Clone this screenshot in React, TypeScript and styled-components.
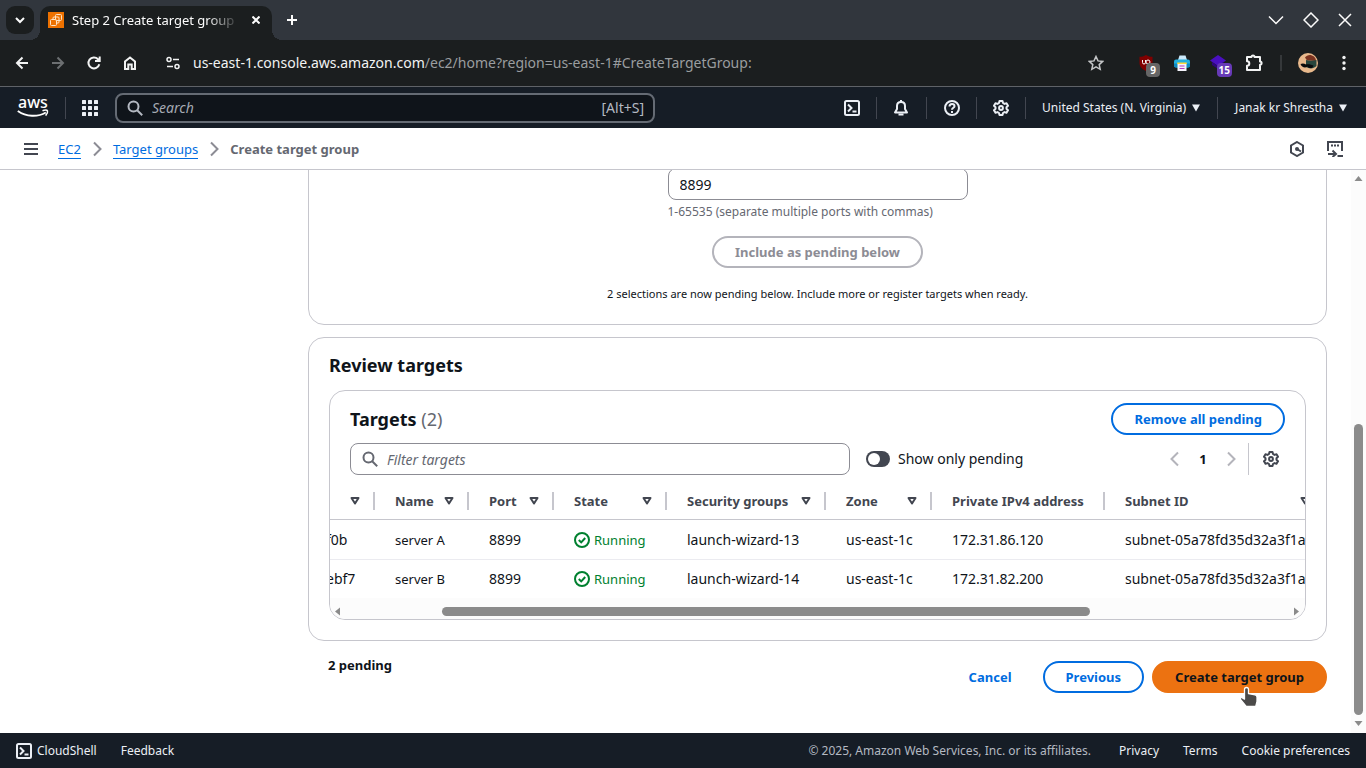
import React from "react";
import styled, { createGlobalStyle } from "styled-components";

const Global = createGlobalStyle`
  *, *::before, *::after { box-sizing: border-box; }
  body { margin: 0; background: #fff; }
  body, button, input { font-family: "Noto Sans", "Open Sans", sans-serif; }
  button { padding: 0; border: 0; background: none; color: inherit; cursor: pointer; }
  a { color: inherit; text-decoration: none; }
  svg { display: block; flex: none; }
`;

const Page = styled.div`
  display: flex;
  flex-direction: column;
  height: 100vh;
  overflow: hidden;
  font-size: 14px;
  line-height: 20px;
  color: #0f141a;
`;

/* ---------- browser window ---------- */

const TabStrip = styled.header`
  display: flex;
  align-items: center;
  height: 40px;
  flex: none;
  padding: 0 10px 0 6px;
  background: #31363d;
  color: #fcfcfc;
`;

const TabSearch = styled.button`
  display: grid;
  place-items: center;
  width: 28px;
  height: 28px;
  border-radius: 9px;
  background: #1b1e1f;
`;

const Tab = styled.div`
  display: flex;
  align-items: center;
  align-self: flex-end;
  width: 232px;
  height: 34px;
  margin-left: 6px;
  padding: 0 8px 6px;
  gap: 8px;
  border-radius: 10px 10px 0 0;
  background: #1b1e1f;
  position: relative;

  &::before, &::after {
    content: "";
    position: absolute;
    bottom: 0;
    width: 10px;
    height: 10px;
  }
  &::before { left: -10px; background: radial-gradient(circle at 0 0, transparent 10px, #1b1e1f 10px); }
  &::after { right: -10px; background: radial-gradient(circle at 100% 0, transparent 10px, #1b1e1f 10px); }
`;

const TabTitle = styled.span`
  flex: 1;
  overflow: hidden;
  white-space: nowrap;
  font-size: 13px;
  mask-image: linear-gradient(to right, #000 80%, transparent);
`;

const IconButton = styled.button<{ $w?: number; $color?: string }>`
  display: grid;
  place-items: center;
  width: ${(p) => p.$w ?? 24}px;
  height: 24px;
  flex: none;
  color: ${(p) => p.$color ?? "inherit"};
`;

const Spacer = styled.div`
  flex: 1;
`;

const WindowButtons = styled.div`
  display: flex;
  gap: 11px;
`;

const Toolbar = styled.div`
  display: flex;
  align-items: center;
  height: 47px;
  flex: none;
  padding: 0 10px;
  border-bottom: 1px solid #5f6267;
  background: #1b1e1f;
  color: #f2f3f3;
`;

const NavGroup = styled.div`
  display: flex;
  gap: 12px;
  margin-right: 23px;
`;

const Address = styled.span`
  flex: 1;
  margin-left: 12px;
  font-size: 14px;
  color: #9a9d9f;

  b { font-weight: 400; color: #f2f3f3; }
`;

const Extensions = styled.div`
  display: flex;
  align-items: center;
  gap: 12px;
`;

const ToolGap = styled.i`
  width: 2px;
`;

const BadgeHost = styled.span`
  position: relative;
  display: block;
`;

const Badge = styled.span<{ $bg: string }>`
  position: absolute;
  top: 8px;
  right: -6px;
  min-width: 14px;
  height: 14px;
  padding: 0 2px;
  border-radius: 4px;
  background: ${(p) => p.$bg};
  color: #fff;
  font-size: 10px;
  font-weight: 700;
  line-height: 14px;
  text-align: center;
`;

const ToolbarRule = styled.i`
  width: 2px;
  height: 16px;
  margin: 0 2px;
  background: #35383a;
`;

/* ---------- console navigation ---------- */

const ConsoleNav = styled.nav`
  display: flex;
  align-items: center;
  height: 41px;
  flex: none;
  padding: 0 19px 0 17px;
  background: #161d26;
  color: #ebeff5;
  font-size: 12px;
`;

const NavRule = styled.i<{ $gap: number }>`
  width: 1px;
  height: 22px;
  margin: 0 ${(p) => p.$gap}px;
  background: #424650;
`;

const NavSearch = styled.label`
  display: flex;
  align-items: center;
  flex: 0 1 540px;
  height: 30px;
  margin-left: 17px;
  padding: 0 9px 0 10px;
  gap: 9px;
  border: 2px solid #656b74;
  border-radius: 8px;
  background: #0f141a;
  color: #b4b9c2;

  input {
    flex: 1;
    min-width: 0;
    padding: 0;
    border: 0;
    outline: 0;
    background: none;
    color: inherit;
    font-size: 14px;
  }
  input::placeholder { color: #a4a9b2; opacity: 1; font-style: italic; }
  span { font-size: 14px; }
`;

const NavMenu = styled.button`
  display: flex;
  align-items: center;
  gap: 6px;
  font-size: 12px;
  white-space: nowrap;
`;

const CrumbBar = styled.nav`
  display: flex;
  align-items: center;
  height: 42px;
  flex: none;
  padding: 0 12px 0 19px;
  border-bottom: 1px solid #c6c6cd;
  background: #fff;
  color: #424650;
`;

const Crumbs = styled.ol`
  display: flex;
  align-items: center;
  gap: 8px;
  margin: 0 0 0 15px;
  padding: 0;
  list-style: none;
  font-size: 13px;
  line-height: 18px;

  a { color: #006ce0; border-bottom: 1px solid #006ce0; }
  li[aria-current] { font-weight: 700; color: #656871; }
`;

const CrumbSep = styled.span`
  display: block;
  color: #8c8c94;
`;

/* ---------- content ---------- */

const Body = styled.div`
  display: flex;
  flex: 1;
  min-height: 0;
`;

const Main = styled.main`
  display: flex;
  flex-direction: column;
  justify-content: flex-end;
  flex: 1;
  min-width: 0;
  overflow: hidden;
  padding: 0 24px 40px 308px;

  > * { flex: none; }
`;

const Card = styled.section`
  border: 1px solid #c6c6cd;
  border-radius: 16px;
  background: #fff;
`;

const PortsCard = styled(Card)`
  display: flex;
  flex-direction: column;
  align-items: center;
  margin-bottom: 12px;
  padding: 40px 20px 22px;
`;

const Field = styled.label`
  display: flex;
  flex-direction: column;
  gap: 4px;
  width: 300px;
  margin-bottom: 16px;
  font-size: 12px;
  line-height: 16px;
  color: #656871;

  input {
    height: 32px;
    padding: 0 11px;
    border: 1px solid #8c8c94;
    border-radius: 8px;
    background: #fff;
    color: #0f141a;
    font-size: 14px;
  }
`;

const Note = styled.p`
  margin: 18px 0 0;
  font-size: 11px;
  line-height: 16px;
`;

const tones = {
  normal: { border: "#006ce0", bg: "#fff", color: "#006ce0" },
  disabled: { border: "#b4b4bb", bg: "#fff", color: "#8c8c94" },
  primary: { border: "#ec7211", bg: "#ec7211", color: "#0f141a" },
  link: { border: "transparent", bg: "transparent", color: "#006ce0" },
};

const Button = styled.button<{ $tone?: keyof typeof tones }>`
  height: 32px;
  padding: 0 21px;
  border: 2px solid ${(p) => tones[p.$tone ?? "normal"].border};
  border-radius: 16px;
  background: ${(p) => tones[p.$tone ?? "normal"].bg};
  color: ${(p) => tones[p.$tone ?? "normal"].color};
  font-size: 13px;
  font-weight: 700;
  line-height: 20px;
  white-space: nowrap;
`;

const ReviewCard = styled(Card)`
  padding: 15px 20px 20px;
`;

const Heading = styled.h2`
  margin: 0;
  font-size: 18px;
  font-weight: 700;
  line-height: 24px;

  span { font-weight: 400; color: #656871; }
`;

const TableCard = styled(Card)`
  margin-top: 13px;
  padding-top: 12px;
  overflow: hidden;
`;

const TableTop = styled.div`
  display: flex;
  align-items: center;
  justify-content: space-between;
  height: 32px;
  margin-bottom: 8px;
  padding: 0 20px;
`;

const TableTools = styled.div`
  display: flex;
  align-items: center;
  height: 32px;
  margin-bottom: 7px;
  padding: 0 22px 0 20px;
`;

const Filter = styled.label`
  display: flex;
  align-items: center;
  gap: 9px;
  flex: 0 1 500px;
  height: 32px;
  margin-right: 16px;
  padding: 0 11px;
  border: 1px solid #8c8c94;
  border-radius: 8px;
  color: #656871;

  input {
    flex: 1;
    min-width: 0;
    padding: 0;
    border: 0;
    outline: 0;
    background: none;
    font-size: 14px;
  }
  input::placeholder { color: #656871; opacity: 1; font-style: italic; }
`;

const Toggle = styled.label`
  display: flex;
  align-items: center;
  gap: 8px;
  font-size: 14px;

  input {
    appearance: none;
    width: 24px;
    height: 16px;
    margin: 0;
    padding: 2px;
    border-radius: 8px;
    background: #424650;
  }
  input::before {
    content: "";
    display: block;
    width: 12px;
    height: 12px;
    border-radius: 6px;
    background: #fff;
  }
  input:checked { background: #006ce0; padding-left: 10px; }
`;

const Pager = styled.div`
  display: flex;
  align-items: center;
  gap: 4px;
  font-size: 13px;
  font-weight: 700;

  span { width: 24px; text-align: center; }
`;

const ToolRule = styled.i`
  width: 1px;
  height: 32px;
  margin: 0 10px 0 5px;
  background: #c6c6cd;
`;

const TableScroller = styled.div`
  overflow: hidden;
`;

const Table = styled.table`
  width: 1019px;
  margin-left: -24px;
  border-collapse: separate;
  border-spacing: 0;
  table-layout: fixed;
  font-size: 14px;
  line-height: 20px;
  white-space: nowrap;

  th, td { padding: 0; text-align: left; border-bottom: 1px solid #ebebf0; }
  th { height: 38px; border-bottom-color: #c6c6cd; color: #424650; font-size: 13px; }
  td { height: 40px; padding-left: 20px; }
  tr:last-child td { height: 38px; border-bottom: 0; }
`;

const Col = styled.col<{ $w: number }>`
  width: ${(p) => p.$w}px;
`;

const HeadCell = styled.div<{ $last?: boolean }>`
  display: flex;
  align-items: center;
  justify-content: space-between;
  height: 18px;
  padding: 0 13px 0 20px;
  border-right: 2px solid ${(p) => (p.$last ? "transparent" : "#c6c6cd")};
`;

const NameText = styled.span`
  font-size: 13px;
`;

const Status = styled.span`
  display: flex;
  align-items: center;
  gap: 4px;
  font-size: 13px;
  color: #00802f;
`;

const HScroll = styled.div`
  display: flex;
  align-items: center;
  height: 21px;
  padding: 6px 6px 0 5px;
  background: #fcfcfc;
  color: #8b8b8b;
`;

const HTrack = styled.div`
  display: grid;
  grid-template-columns: 98fr 648fr 200fr;
  flex: 1;

  i { grid-column: 2; height: 9px; border-radius: 5px; background: #8b8b8b; }
`;

const Actions = styled.div`
  display: flex;
  align-items: center;
  gap: 8px;
  margin-top: 20px;
  padding-left: 20px;
`;

const Pending = styled.strong`
  flex: 1;
  align-self: flex-start;
  height: 20px;
  margin-top: -6px;
  font-size: 13px;
`;

const PrimaryWrap = styled.div`
  position: relative;

  > svg { position: absolute; left: 86px; top: 24px; pointer-events: none; }
`;

const VScroll = styled.div`
  display: flex;
  flex-direction: column;
  align-items: center;
  width: 15px;
  padding: 6px 0 6px;
  background: #fcfcfc;
  color: #8b8b8b;
`;

const VTrack = styled.div`
  display: grid;
  grid-template-rows: 239fr 291fr 3fr;
  flex: 1;

  i { grid-row: 2; width: 9px; border-radius: 5px; background: #8b8b8b; }
`;

const Footer = styled.footer`
  display: flex;
  align-items: center;
  height: 35px;
  flex: none;
  padding: 0 16px;
  gap: 24px;
  background: #161d26;
  color: #ebeff5;
  font-size: 12px;
  white-space: nowrap;

  p { margin: 0 4px 0 auto; color: #b4b9c2; }
`;

const ShellLink = styled.button`
  display: flex;
  align-items: center;
  gap: 5px;
  font-size: 12px;
`;

/* ---------- icons ---------- */

type IconProps = { size?: number; w?: number; children: React.ReactNode; box?: string };
const Icon = ({ size = 16, w = 2, box = "0 0 16 16", children }: IconProps) => (
  <svg width={size} height={size} viewBox={box} fill="none" stroke="currentColor" strokeWidth={w} aria-hidden="true">
    {children}
  </svg>
);

const Gear = () => (
  <Icon>
    <path d="M6.500 1h3l.5 2 1.500.900 2-.6 1.500 2.500L13.500 7.200v1.600l1.500 1.400-1.500 2.500-2-.6-1.500.900-.5 2h-3l-.5-2-1.500-.9-2 .6L1 10.200l1.500-1.400V7.200L1 5.800l1.500-2.500 2 .6L6 3z" strokeLinejoin="round" />
    <circle cx="8" cy="8" r="1.900" />
  </Icon>
);

const Shell = () => (
  <Icon>
    <rect x="1" y="1" width="14" height="14" rx="1.500" />
    <path d="M4 4.500 7.500 8 4 11.500M8.500 11.500H12.500" />
  </Icon>
);

const Magnifier = () => (
  <Icon>
    <circle cx="6.500" cy="6.500" r="5" />
    <path d="m10.200 10.200 5 5" />
  </Icon>
);

const Caret = () => (
  <svg width="8" height="8" viewBox="0 0 8 8" fill="currentColor" aria-hidden="true"><path d="M0 .5h8L4 7.500z" /></svg>
);

const SortIcon = () => (
  <svg width="10" height="10" viewBox="0 0 10 10" fill="none" stroke="currentColor" strokeWidth="2" strokeLinejoin="round" aria-hidden="true">
    <path d="M1.500 2h7L5 7.500z" />
  </svg>
);

const Chevron = ({ left }: { left?: boolean }) => (
  <Icon>{left ? <path d="M11 1.500 4.500 8l6.500 6.500" /> : <path d="M5 1.500 11.500 8 5 14.500" />}</Icon>
);

const Check = () => (
  <Icon>
    <circle cx="8" cy="8" r="7" />
    <path d="m4.800 8 2.400 2.400 4-4.400" />
  </Icon>
);

const Arrow = ({ d }: { d: string }) => (
  <svg width="9" height="9" viewBox="0 0 9 9" fill="currentColor" aria-hidden="true"><path d={d} /></svg>
);

const AwsLogo = () => (
  <svg width="32" height="22" viewBox="0 0 32 22" fill="none" overflow="visible" aria-label="aws">
    <text x="1" y="11" fill="#fff" fontFamily="Noto Sans, sans-serif" fontSize="16" fontWeight="500">aws</text>
    <path d="M.8 14c8.500 6 20 6.300 28 1.500" stroke="#fff" strokeWidth="2" />
    <path d="M25.500 13.800c2-.9 4.600-1 5 .1.300 1.100-.5 3.300-1.900 4.700" stroke="#fff" strokeWidth="1.500" />
  </svg>
);

const Favicon = () => (
  <svg width="16" height="16" viewBox="0 0 16 16" fill="none" aria-hidden="true">
    <rect width="16" height="16" fill="#ed7100" />
    <g stroke="#ffe3c4" strokeWidth="1">
      <rect x="7.500" y="2.500" width="6" height="6" rx="1" />
      <rect x="2.500" y="7.500" width="6" height="6" rx="1" />
      <path d="M5 7.500V6q0-1 1-1h4q1 0 1 1v4q0 1-1 1H8.500" />
    </g>
  </svg>
);

const Shield = () => (
  <svg width="16" height="16" viewBox="0 0 16 16" aria-hidden="true">
    <path d="M8 0c2 1.300 4 1.800 6.500 1.800v6C14.500 12 11.500 14.500 8 16 4.500 14.500 1.500 12 1.500 7.800v-6C4 1.800 6 1.300 8 0z" fill="#800000" />
    <path d="M4.500 5v2.500a1.500 1.500 0 0 0 3 0V5" stroke="#fff" fill="none" />
    <circle cx="10" cy="7" r="2" stroke="#fff" fill="none" />
  </svg>
);

const Printer = () => (
  <svg width="16" height="16" viewBox="0 0 16 16" aria-hidden="true">
    <path d="M4 5 5.500.5h6L13 5z" fill="#cbe9fb" />
    <rect y="4.500" width="16" height="8" rx="2" fill="#22b0e0" />
    <path d="M0 8.500h16v2a2 2 0 0 1-2 2H2a2 2 0 0 1-2-2z" fill="#0d8ac0" />
    <rect x="3" y="7.500" width="10" height="1.500" rx=".7" fill="#ffd83c" />
    <path d="M3.500 9h9v7h-9z" fill="#f4f4fb" />
    <path d="M5.500 11h5M5.500 13.500h5" stroke="#b13bc4" strokeWidth="1.200" />
  </svg>
);

const Cap = () => (
  <svg width="16" height="16" viewBox="0 0 16 16" aria-hidden="true">
    <path d="M8 0 16 5.500 8 11 0 5.500z" fill="#4a0fc0" />
    <path d="M2 7v3l6 4 6-4V7l-6 4z" fill="#2d067c" />
  </svg>
);

const Avatar = () => (
  <svg width="20" height="20" viewBox="0 0 20 20" aria-hidden="true">
    <circle cx="10" cy="10" r="10" fill="#e8b98c" />
    <path d="M7 4.500C9 1.500 13 1 16 3.500c1.500 1.500 2 3 2 4.500L9 7.500z" fill="#7b3320" />
    <path d="M8 7c3 1 7 1 10.500 0v6c-3 3-7 3-10.500 1z" fill="#27463d" />
    <path d="M2.500 11c2-1 4-.5 5.500.5 2-.5 4.500 0 7.500 1-.5 3-4 3.500-6 1-2 2-6 1-7-2.500z" fill="#090b0c" />
  </svg>
);

const Hand = () => (
  <svg width="22" height="24" viewBox="0 0 22 24" aria-hidden="true">
    <path d="M8.500 2.500c1.200 0 2 .8 2 2v4l6.500 1.300c1.400.3 2 1 2 2.400v4.300l-1.300 5H8.200L2.500 14.500c-.8-1.400.8-2.500 2-1.600l2 1.200V4.500c0-1.200.8-2 2-2z" fill="#4b4a49" stroke="#fff" strokeWidth="1.300" strokeLinejoin="round" />
  </svg>
);

/* ---------- data ---------- */

const columns = [
  { label: "", width: 69, sort: true },
  { label: "Name", width: 94, sort: true },
  { label: "Port", width: 85, sort: true },
  { label: "State", width: 113, sort: true },
  { label: "Security groups", width: 159, sort: true },
  { label: "Zone", width: 106, sort: true },
  { label: "Private IPv4 address", width: 173, sort: false },
  { label: "Subnet ID", width: 220, sort: true },
];

const targets = [
  { id: "f0b", name: "server A", port: 8899, state: "Running", group: "launch-wizard-13", zone: "us-east-1c", ip: "172.31.86.120", subnet: "subnet-05a78fd35d32a3f1a" },
  { id: "ebf7", name: "server B", port: 8899, state: "Running", group: "launch-wizard-14", zone: "us-east-1c", ip: "172.31.82.200", subnet: "subnet-05a78fd35d32a3f1a" },
];

export default function App() {
  return (
    <Page>
      <Global />
      <TabStrip>
        <TabSearch aria-label="Search tabs"><Icon size={10} box="0 0 10 10"><path d="M1 3l4 4 4-4" /></Icon></TabSearch>
        <Tab>
          <Favicon />
          <TabTitle>Step 2 Create target group</TabTitle>
          <IconButton $w={16} aria-label="Close tab"><Icon size={8} box="0 0 8 8"><path d="m.5.5 7 7m0-7-7 7" /></Icon></IconButton>
        </Tab>
        <IconButton $w={40} aria-label="New tab"><Icon size={10} box="0 0 10 10"><path d="M5 0v10M0 5h10" /></Icon></IconButton>
        <Spacer />
        <WindowButtons>
          <IconButton aria-label="Minimize"><Icon w={1.5}><path d="m1 4.500 7 7 7-7" /></Icon></IconButton>
          <IconButton aria-label="Maximize"><Icon w={1.5}><path d="M8 1 15 8l-7 7-7-7z" /></Icon></IconButton>
          <IconButton $w={22} aria-label="Close"><Icon w={1.5}><path d="m2 2 12 12m0-12L2 14" /></Icon></IconButton>
        </WindowButtons>
      </TabStrip>

      <Toolbar>
        <NavGroup>
          <IconButton aria-label="Back"><Icon><path d="M14 8H3m5.500-5.500L3 8l5.500 5.500" /></Icon></IconButton>
          <IconButton $color="#6c6f71" aria-label="Forward"><Icon><path d="M2 8h11M7.500 2.500 13 8l-5.500 5.500" /></Icon></IconButton>
          <IconButton aria-label="Reload"><Icon><path d="M13.300 9.300A5.500 5.500 0 1 1 12 4.200l1.500 1.500M13.700 1.500V6H9" /></Icon></IconButton>
          <IconButton aria-label="Home"><Icon><path d="M3 14V6.500l5-4 5 4V14H9.700V9.500H6.300V14z" /></Icon></IconButton>
        </NavGroup>
        <IconButton $w={16} aria-label="Site information">
          <Icon size={14} box="0 0 14 14" w={1.5}><circle cx="3" cy="3.500" r="2" /><path d="M7 3.500h6M1 10.500h6" /><circle cx="11" cy="10.500" r="2" /></Icon>
        </IconButton>
        <Address><b>us-east-1.console.aws.amazon.com</b>/ec2/home?region=us-east-1#CreateTargetGroup:</Address>
        <Extensions>
          <IconButton $color="#c4c6c7" aria-label="Bookmark"><Icon w={1.5}><path d="m8 1.500 2 4.400 4.700.5-3.500 3.200 1 4.700L8 11.900l-4.200 2.400 1-4.700L1.300 6.400 6 5.900z" /></Icon></IconButton>
          <ToolGap />
          <IconButton aria-label="uBlock"><BadgeHost><Shield /><Badge $bg="#666">9</Badge></BadgeHost></IconButton>
          <IconButton aria-label="Print"><Printer /></IconButton>
          <IconButton aria-label="Courses"><BadgeHost><Cap /><Badge $bg="#673ab7">15</Badge></BadgeHost></IconButton>
          <IconButton aria-label="Extensions"><Icon size={18} box="0 0 18 18"><path d="M2 3h4.500a1.500 1.500 0 0 1 3 0H15v4.500a1.600 1.600 0 0 1 0 3.200V16H2v-4.200a2.300 2.300 0 0 0 0-4.600z" strokeLinejoin="round" /></Icon></IconButton>
          <ToolbarRule />
          <IconButton aria-label="Profile"><Avatar /></IconButton>
          <IconButton aria-label="Menu"><svg width="4" height="16" viewBox="0 0 4 16" fill="currentColor"><circle cx="2" cy="2.500" r="1.700" /><circle cx="2" cy="8" r="1.700" /><circle cx="2" cy="13.500" r="1.700" /></svg></IconButton>
        </Extensions>
      </Toolbar>

      <ConsoleNav aria-label="Console">
        <a href="#home"><AwsLogo /></a>
        <NavRule $gap={16} />
        <button aria-label="Services">
          <svg width="16" height="16" viewBox="0 0 16 16" fill="currentColor">
            {[0, 6, 12].map((y) => [0, 6, 12].map((x) => <rect key={`${x}-${y}`} x={x} y={y} width="4" height="4" rx=".5" />))}
          </svg>
        </button>
        <NavSearch>
          <Magnifier />
          <input type="search" placeholder="Search" aria-label="Search" />
          <span>[Alt+S]</span>
        </NavSearch>
        <Spacer />
        <button aria-label="CloudShell"><Shell /></button>
        <NavRule $gap={16} />
        <button aria-label="Notifications">
          <Icon><path d="M8 2C5.500 2 4 3.800 4 6v3l-2 3.500h12L12 9V6c0-2.200-1.500-4-4-4z" strokeLinejoin="round" /><path d="M5.500 14.500h5M8 0v2" /></Icon>
        </button>
        <NavRule $gap={17} />
        <button aria-label="Help">
          <Icon><circle cx="8" cy="8" r="7" /><path d="M5.500 6.500C5.500 5 6.500 4 8 4s2.500 1 2.500 2.200C10.500 7.700 8 7.800 8 9.700M8 11v2" /></Icon>
        </button>
        <NavRule $gap={16} />
        <button aria-label="Settings"><Gear /></button>
        <NavRule $gap={16} />
        <NavMenu>United States (N. Virginia)<Caret /></NavMenu>
        <NavRule $gap={17} />
        <NavMenu>Janak kr Shrestha<Caret /></NavMenu>
      </ConsoleNav>

      <CrumbBar aria-label="Breadcrumb">
        <IconButton aria-label="Open navigation"><Icon><path d="M1 3h14M1 8h14M1 13h14" /></Icon></IconButton>
        <Crumbs>
          <li><a href="#ec2">EC2</a></li>
          <li><CrumbSep><Chevron /></CrumbSep></li>
          <li><a href="#groups">Target groups</a></li>
          <li><CrumbSep><Chevron /></CrumbSep></li>
          <li aria-current="page">Create target group</li>
        </Crumbs>
        <Spacer />
        <IconButton $w={38} aria-label="Resources">
          <Icon><path d="M8 1l6 3.500v7L8 15l-6-3.500v-7z" /><circle cx="8" cy="8" r="2" fill="currentColor" stroke="none" /><path d="m8 8 4 2.500" /></Icon>
        </IconButton>
        <IconButton $w={38} aria-label="Open shell panel">
          <Icon><path d="M1 10V1h14v9M1 13h7M5.500 9.500 9 13l-3.500 3M10.500 15H16" /><path d="M4 4.500h2M7 4.500h2M10 4.500h2" /></Icon>
        </IconButton>
      </CrumbBar>

      <Body>
        <Main>
          <PortsCard>
            <Field>
              <input defaultValue="8899" />
              1-65535 (separate multiple ports with commas)
            </Field>
            <Button $tone="disabled" disabled>Include as pending below</Button>
            <Note>2 selections are now pending below. Include more or register targets when ready.</Note>
          </PortsCard>

          <ReviewCard>
            <Heading>Review targets</Heading>
            <TableCard>
              <TableTop>
                <Heading as="h3">Targets <span>(2)</span></Heading>
                <Button>Remove all pending</Button>
              </TableTop>
              <TableTools>
                <Filter>
                  <Magnifier />
                  <input type="search" placeholder="Filter targets" aria-label="Filter targets" />
                </Filter>
                <Toggle><input type="checkbox" role="switch" />Show only pending</Toggle>
                <Spacer />
                <Pager>
                  <IconButton $color="#b4b4bb" aria-label="Previous page"><Chevron left /></IconButton>
                  <span>1</span>
                  <IconButton $color="#b4b4bb" aria-label="Next page"><Chevron /></IconButton>
                </Pager>
                <ToolRule />
                <IconButton $color="#424650" aria-label="Preferences"><Gear /></IconButton>
              </TableTools>
              <TableScroller>
                <Table>
                  <colgroup>{columns.map((c) => <Col key={c.label} $w={c.width} />)}</colgroup>
                  <thead>
                    <tr>
                      {columns.map((c, i) => (
                        <th key={c.label} scope="col">
                          <HeadCell $last={i === columns.length - 1}>
                            <span>{c.label}</span>
                            {c.sort && <SortIcon />}
                          </HeadCell>
                        </th>
                      ))}
                    </tr>
                  </thead>
                  <tbody>
                    {targets.map((t) => (
                      <tr key={t.id}>
                        <td>{t.id}</td>
                        <td><NameText>{t.name}</NameText></td>
                        <td>{t.port}</td>
                        <td><Status><Check />{t.state}</Status></td>
                        <td>{t.group}</td>
                        <td>{t.zone}</td>
                        <td>{t.ip}</td>
                        <td>{t.subnet}</td>
                      </tr>
                    ))}
                  </tbody>
                </Table>
              </TableScroller>
              <HScroll>
                <Arrow d="M5 .5v8L0 4.500z" />
                <HTrack><i /></HTrack>
                <Arrow d="M4 .5v8l5-4z" />
              </HScroll>
            </TableCard>
          </ReviewCard>

          <Actions>
            <Pending>2 pending</Pending>
            <Button $tone="link">Cancel</Button>
            <Button>Previous</Button>
            <PrimaryWrap>
              <Button $tone="primary">Create target group</Button>
              <Hand />
            </PrimaryWrap>
          </Actions>
        </Main>
        <VScroll>
          <Arrow d="M.5 5h8L4.500 0z" />
          <VTrack><i /></VTrack>
          <Arrow d="M.5 3h8l-4 5z" />
        </VScroll>
      </Body>

      <Footer>
        <ShellLink><Shell />CloudShell</ShellLink>
        <a href="#feedback">Feedback</a>
        <p>© 2025, Amazon Web Services, Inc. or its affiliates.</p>
        <a href="#privacy">Privacy</a>
        <a href="#terms">Terms</a>
        <a href="#cookies">Cookie preferences</a>
      </Footer>
    </Page>
  );
}
